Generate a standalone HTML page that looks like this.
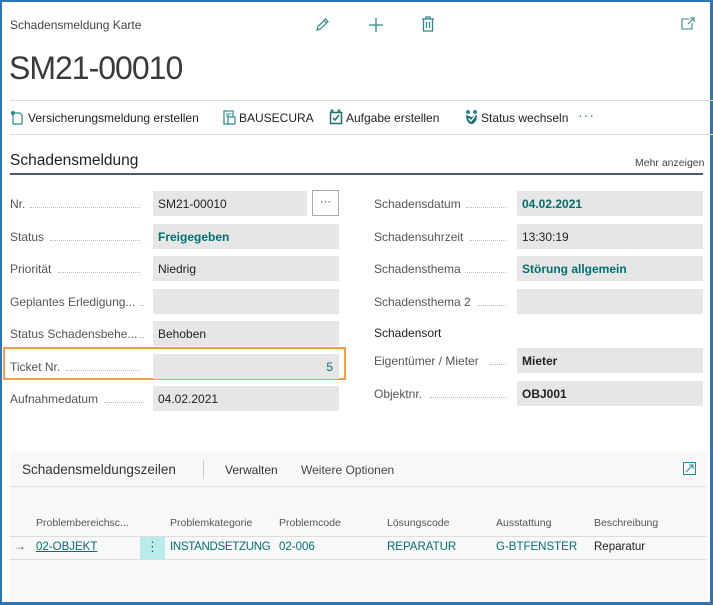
<!DOCTYPE html>
<html><head><meta charset="utf-8"><style>
*{margin:0;padding:0;box-sizing:border-box}
body{width:713px;height:605px;background:#fff;font-family:"Liberation Sans",sans-serif;color:#333;position:relative;overflow:hidden}
.a{position:absolute;white-space:nowrap}
.lbl{font-size:12px;color:#555;}
.dots{position:absolute;border-bottom:1px dotted #bbb;height:1px}
.f{position:absolute;background:#e6e6e6;height:25px;font-size:12px;line-height:26px;padding-left:5px;color:#222}
.t{color:#007070;font-weight:bold}
.b{font-weight:bold;color:#222}
.hd{font-size:10.5px;color:#555}
.rv{font-size:11.5px;color:#007070}
</style></head><body>
<div class="a" style="left:0;top:0;width:713px;height:605px;border:2px solid #2e75b6;border-right-width:3px;border-bottom-width:3px"></div>

<div class="a" style="left:10px;top:18px;font-size:12px;color:#444">Schadensmeldung Karte</div>
<svg class="a" style="left:314px;top:17px" width="16" height="16" viewBox="0 0 16 16"><path d="M3 13 L4 9.5 L11.5 2 L14 4.5 L6.5 12 Z M10 3.5 L12.5 6" fill="none" stroke="#2a8a8a" stroke-width="1.2"/></svg>
<svg class="a" style="left:368px;top:17px" width="16" height="16" viewBox="0 0 16 16"><path d="M8 1V15M1 8H15" stroke="#2a8a8a" stroke-width="1.3"/></svg>
<svg class="a" style="left:421px;top:16px" width="14" height="16" viewBox="0 0 14 16"><path d="M1 3H13M5 3V1H9V3M2.5 3V15H11.5V3M5.5 6V12M8.5 6V12" fill="none" stroke="#2a8a8a" stroke-width="1.3"/></svg>
<svg class="a" style="left:681px;top:17px" width="14" height="13" viewBox="0 0 14 13"><path d="M8 2H1V12H11V6M9 1H13V5M13 1L7 7" fill="none" stroke="#2a8a8a" stroke-width="1.1"/></svg>

<div class="a" style="left:9px;top:50px;font-size:32px;color:#3a3a3a;letter-spacing:-1px">SM21-00010</div>
<div class="a" style="left:10px;top:100px;width:703px;height:1px;background:#ddd"></div>

<svg class="a" style="left:10px;top:110px" width="14" height="15" viewBox="0 0 14 15"><path d="M3 3H10L12 5V14H3Z" fill="none" stroke="#2a8a8a" stroke-width="1.2"/><circle cx="3" cy="3" r="2" fill="#2a8a8a"/></svg>
<div class="a" style="left:28px;top:111px;font-size:12px;color:#222">Versicherungsmeldung erstellen</div>
<svg class="a" style="left:223px;top:110px" width="13" height="15" viewBox="0 0 13 15"><rect x="1" y="1" width="9" height="13" fill="none" stroke="#2a8a8a" stroke-width="1.2"/><rect x="5" y="7" width="7" height="7" fill="#fff" stroke="#2a8a8a" stroke-width="1.2"/><path d="M3 4H8M3 6H6" stroke="#2a8a8a"/></svg>
<div class="a" style="left:239px;top:111px;font-size:12px;color:#222">BAUSECURA</div>
<svg class="a" style="left:329px;top:109px" width="14" height="16" viewBox="0 0 14 16"><rect x="1.5" y="3.5" width="11" height="11" fill="none" stroke="#1f6f6f" stroke-width="1.5"/><path d="M4 9L6 11L10 6" fill="none" stroke="#1f6f6f" stroke-width="1.5"/><circle cx="3" cy="2" r="1.6" fill="#2a8a8a"/><circle cx="10" cy="2" r="1.6" fill="#2a8a8a"/></svg>
<div class="a" style="left:346px;top:111px;font-size:12px;color:#222">Aufgabe erstellen</div>
<svg class="a" style="left:464px;top:109px" width="15" height="16" viewBox="0 0 15 16"><path d="M2 6C2 12 5 15 7.5 15C10 15 13 12 13 6L7.5 8Z" fill="#1f6f6f"/><path d="M4.5 9.5L7 12L11 7" fill="none" stroke="#fff" stroke-width="1.4"/><circle cx="4" cy="3" r="2" fill="#2a8a8a"/><circle cx="11" cy="3" r="2" fill="#2a8a8a"/></svg>
<div class="a" style="left:481px;top:111px;font-size:12px;color:#222">Status wechseln</div>
<div class="a" style="left:578px;top:107px;font-size:14px;color:#2a8a8a;letter-spacing:1px">···</div>
<div class="a" style="left:10px;top:134px;width:703px;height:1px;background:#ddd"></div>

<div class="a" style="left:10px;top:152px;font-size:15.5px;color:#222">Schadensmeldung</div>
<div class="a" style="left:635px;top:157px;font-size:10.5px;color:#444">Mehr anzeigen</div>
<div class="a" style="left:10px;top:173px;width:693px;height:2px;background:#4d5a6b"></div>

<!-- left column -->
<div class="a lbl" style="left:10px;top:197px">Nr.</div><div class="dots" style="left:30px;top:207px;width:110px"></div>
<div class="f" style="left:153px;top:191px;width:154px">SM21-00010</div>
<div class="a" style="left:312px;top:190px;width:27px;height:26px;border:1px solid #aaa;background:#fff;font-size:11px;text-align:center;line-height:22px;color:#333">···</div>

<div class="a lbl" style="left:10px;top:230px">Status</div><div class="dots" style="left:50px;top:240px;width:90px"></div>
<div class="f t" style="left:153px;top:224px;width:186px">Freigegeben</div>

<div class="a lbl" style="left:10px;top:262px">Priorität</div><div class="dots" style="left:58px;top:272px;width:82px"></div>
<div class="f" style="left:153px;top:256px;width:186px">Niedrig</div>

<div class="a lbl" style="left:10px;top:295px">Geplantes Erledigung...</div><div class="dots" style="left:140px;top:305px;width:4px"></div>
<div class="f" style="left:153px;top:289px;width:186px"></div>

<div class="a lbl" style="left:10px;top:327px">Status Schadensbehe...</div><div class="dots" style="left:140px;top:337px;width:4px"></div>
<div class="f" style="left:153px;top:321px;width:186px">Behoben</div>

<div class="a" style="left:3px;top:347px;width:343px;height:33px;border:2px solid #f0a040"></div>
<div class="a lbl" style="left:10px;top:360px">Ticket Nr.</div><div class="dots" style="left:66px;top:370px;width:74px"></div>
<div class="f" style="left:153px;top:354px;width:186px;text-align:right;padding-right:6px;color:#007070">5</div>

<div class="a lbl" style="left:10px;top:392px">Aufnahmedatum</div><div class="dots" style="left:104px;top:402px;width:40px"></div>
<div class="f" style="left:153px;top:386px;width:186px">04.02.2021</div>

<!-- right column -->
<div class="a lbl" style="left:374px;top:197px">Schadensdatum</div><div class="dots" style="left:466px;top:207px;width:40px"></div>
<div class="f t" style="left:517px;top:191px;width:186px">04.02.2021</div>
<div class="a lbl" style="left:374px;top:230px">Schadensuhrzeit</div><div class="dots" style="left:470px;top:240px;width:36px"></div>
<div class="f" style="left:517px;top:224px;width:186px">13:30:19</div>
<div class="a lbl" style="left:374px;top:262px">Schadensthema</div><div class="dots" style="left:465px;top:272px;width:41px"></div>
<div class="f t" style="left:517px;top:256px;width:186px">Störung allgemein</div>
<div class="a lbl" style="left:374px;top:295px">Schadensthema 2</div><div class="dots" style="left:477px;top:305px;width:29px"></div>
<div class="f" style="left:517px;top:289px;width:186px"></div>
<div class="a" style="left:374px;top:326px;font-size:12px;color:#222">Schadensort</div>
<div class="a lbl" style="left:374px;top:354px">Eigentümer / Mieter</div><div class="dots" style="left:490px;top:364px;width:16px"></div>
<div class="f b" style="left:517px;top:348px;width:186px">Mieter</div>
<div class="a lbl" style="left:374px;top:387px">Objektnr.</div><div class="dots" style="left:430px;top:397px;width:76px"></div>
<div class="f b" style="left:517px;top:381px;width:186px">OBJ001</div>

<!-- lines section -->
<div class="a" style="left:10px;top:452px;width:697px;height:150px;background:#f8f8f8"></div>
<div class="a" style="left:22px;top:462px;font-size:13.5px;color:#333">Schadensmeldungszeilen</div>
<div class="a" style="left:203px;top:460px;width:1px;height:19px;background:#ccc"></div>
<div class="a" style="left:225px;top:463px;font-size:12px;color:#333">Verwalten</div>
<div class="a" style="left:301px;top:463px;font-size:12px;color:#444">Weitere Optionen</div>
<svg class="a" style="left:683px;top:462px" width="13" height="13" viewBox="0 0 13 13"><rect x="0.5" y="0.5" width="12" height="12" fill="none" stroke="#2a8a8a"/><path d="M3 10L10 3M6 3H10V7" fill="none" stroke="#2a8a8a"/></svg>
<div class="a" style="left:10px;top:486px;width:697px;height:1px;background:#e0e0e0"></div>

<div class="a hd" style="left:36px;top:517px">Problembereichsc...</div>
<div class="a hd" style="left:170px;top:517px">Problemkategorie</div>
<div class="a hd" style="left:279px;top:517px">Problemcode</div>
<div class="a hd" style="left:387px;top:517px">Lösungscode</div>
<div class="a hd" style="left:496px;top:517px">Ausstattung</div>
<div class="a hd" style="left:594px;top:517px">Beschreibung</div>
<div class="a" style="left:10px;top:536px;width:697px;height:1px;background:#ddd"></div>
<div class="a" style="left:10px;top:559px;width:697px;height:1px;background:#ddd"></div>
<div class="a" style="left:14px;top:539px;font-size:12px;color:#555">→</div>
<div class="a rv" style="left:36px;top:541px;text-decoration:underline">02-OBJEKT</div>
<div class="a" style="left:140px;top:537px;width:25px;height:22px;background:#b8ecec;text-align:center;font-size:13px;line-height:20px;color:#555">⋮</div>
<div class="a rv" style="left:170px;top:541px;letter-spacing:-0.3px">INSTANDSETZUNG</div>
<div class="a rv" style="left:279px;top:541px">02-006</div>
<div class="a rv" style="left:387px;top:541px">REPARATUR</div>
<div class="a rv" style="left:496px;top:541px">G-BTFENSTER</div>
<div class="a" style="left:594px;top:541px;font-size:11.5px;color:#222">Reparatur</div>
</body></html>
